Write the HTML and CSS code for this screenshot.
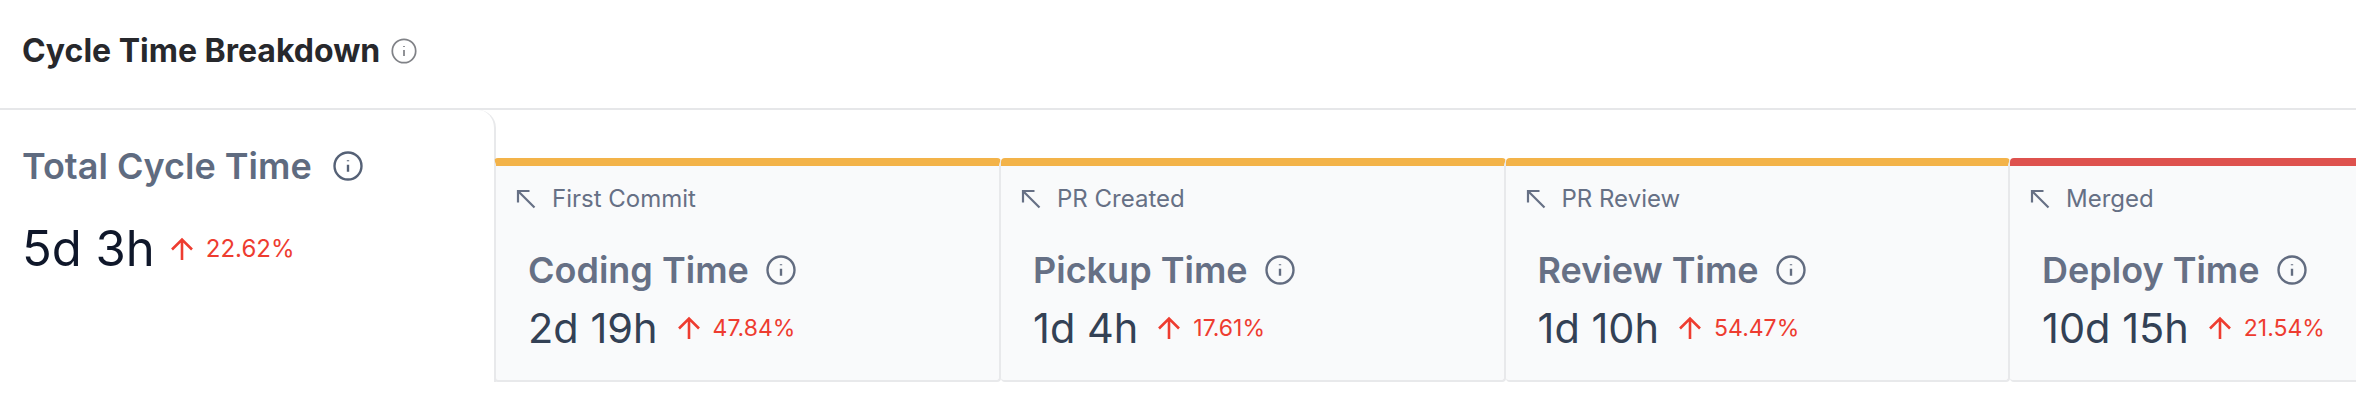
FILE: index.html
```html
<!DOCTYPE html>
<html lang="en">
<head>
<meta charset="utf-8">
<title>Cycle Time Breakdown</title>
<link rel="stylesheet" href="styles.css">
</head>
<body>
<svg class="defs" width="0" height="0" aria-hidden="true">
  <symbol id="info" viewBox="0 0 24 24"><circle cx="12" cy="12" r="10.8" fill="none" stroke="currentColor"/><path d="M12 11v5.5M12 7.4v.8" fill="none" stroke="currentColor"/></symbol>
  <symbol id="up" viewBox="0 0 24 24"><path d="M12 23V2.5M2 12.5l10-10 10 10" fill="none" stroke="currentColor" stroke-width="2.6"/></symbol>
  <symbol id="nw" viewBox="0 0 20 20"><path d="M18.5 18.5L2 2M2 13.5V2h11.5" fill="none" stroke="currentColor" stroke-width="2.2"/></symbol>
</svg>
<header class="header">
  <h1 class="title">Cycle Time Breakdown</h1>
  <svg class="icon-head"><use href="#info"/></svg>
</header>
<main class="board">
  <section class="total">
    <div class="total-label"><span>Total Cycle Time</span><svg class="icon-total"><use href="#info"/></svg></div>
    <div class="total-row"><span class="total-value">5d 3h</span><svg class="arrow"><use href="#up"/></svg><span class="delta">22.62%</span></div>
  </section>
  <section class="stages">
    <article class="stage warn">
      <div class="from"><svg class="nw"><use href="#nw"/></svg><span>First Commit</span></div>
      <div class="stage-label"><span>Coding Time</span><svg class="icon-stage"><use href="#info"/></svg></div>
      <div class="stage-row"><span class="stage-value">2d 19h</span><svg class="arrow"><use href="#up"/></svg><span class="delta">47.84%</span></div>
    </article>
    <article class="stage warn">
      <div class="from"><svg class="nw"><use href="#nw"/></svg><span>PR Created</span></div>
      <div class="stage-label"><span>Pickup Time</span><svg class="icon-stage"><use href="#info"/></svg></div>
      <div class="stage-row"><span class="stage-value">1d 4h</span><svg class="arrow"><use href="#up"/></svg><span class="delta">17.61%</span></div>
    </article>
    <article class="stage warn">
      <div class="from"><svg class="nw"><use href="#nw"/></svg><span>PR Review</span></div>
      <div class="stage-label"><span>Review Time</span><svg class="icon-stage"><use href="#info"/></svg></div>
      <div class="stage-row"><span class="stage-value">1d 10h</span><svg class="arrow"><use href="#up"/></svg><span class="delta">54.47%</span></div>
    </article>
    <article class="stage bad">
      <div class="from"><span class="from-left"><svg class="nw"><use href="#nw"/></svg><span>Merged</span></span><span class="to">Deployed</span></div>
      <div class="stage-label"><span>Deploy Time</span><svg class="icon-stage"><use href="#info"/></svg></div>
      <div class="stage-row"><span class="stage-value">10d 15h</span><svg class="arrow"><use href="#up"/></svg><span class="delta">21.54%</span></div>
    </article>
  </section>
</main>
</body>
</html>
```
FILE: styles.css
```css
* { box-sizing: border-box; }
html, body { margin: 0; height: 100%; overflow: hidden; background: #fff; }
body { font-family: Inter, "Liberation Sans", sans-serif; }
.defs { display: block; height: 0; }
.header { height: 110px; display: flex; align-items: center; gap: 11px; padding: 0 22px 6px; border-bottom: 2px solid #e6e7e9; }
.title { margin: 0; font-size: 32px; font-weight: 700; line-height: 40px; color: #27282c; }
.icon-head { width: 26px; height: 26px; color: #808287; stroke-width: 1.6; }
.board { display: flex; align-items: flex-start; }
.total { width: 496px; height: 272px; flex: none; padding: 36px 22px 0; border-right: 2px solid #e8e9eb; border-top-right-radius: 18px; }
.total-label { display: flex; align-items: center; gap: 21px; font-size: 36px; font-weight: 600; line-height: 40px; color: #5f6b80; }
.icon-total { width: 30px; height: 30px; color: #556176; stroke-width: 1.9; }
.total-row { display: flex; align-items: center; margin-top: 34px; }
.total-value { font-size: 49px; line-height: 58px; color: #0f172a; }
.arrow { flex: none; width: 24px; height: 24px; color: #ee3c30; margin: 0 12px 0 15px; }
.delta { font-size: 24px; line-height: 30px; color: #ee3c30; }
.stages { flex: 1; min-width: 0; display: flex; margin: 48px 0 0 -2px; overflow: hidden; }
.stage { flex: none; width: 504.5px; height: 224px; background: #f9fafb; border: 2px solid #e8e9eb; border-top: 8px solid; border-left-width: 0; border-radius: 4px; padding: 19px 0 0 20px; }
.stage:first-child { width: 507px; border-left-width: 2px; }
.stage:last-child { width: 700px; }
.warn { border-top-color: #f3b349; }
.bad { border-top-color: #de524e; }
.from { display: flex; align-items: center; gap: 16px; font-size: 24px; line-height: 28px; color: #667085; white-space: nowrap; }
.from-left { flex: none; width: 321px; display: flex; align-items: center; gap: 16px; }
.to { flex: none; }
.nw { flex: none; width: 20px; height: 20px; color: #667085; }
.stage-label { display: flex; align-items: center; gap: 17px; margin: 35px 0 0 12px; font-size: 36px; font-weight: 600; line-height: 44px; color: #667085; }
.icon-stage { width: 30px; height: 30px; color: #626c80; stroke-width: 1.9; }
.stage-row { display: flex; align-items: center; margin: 11px 0 0 12px; }
.stage-value { font-size: 41.5px; line-height: 50px; color: #334155; }
.stage-row .arrow { margin-left: 19px; }
.stage-row .delta { font-size: 23px; }
```
